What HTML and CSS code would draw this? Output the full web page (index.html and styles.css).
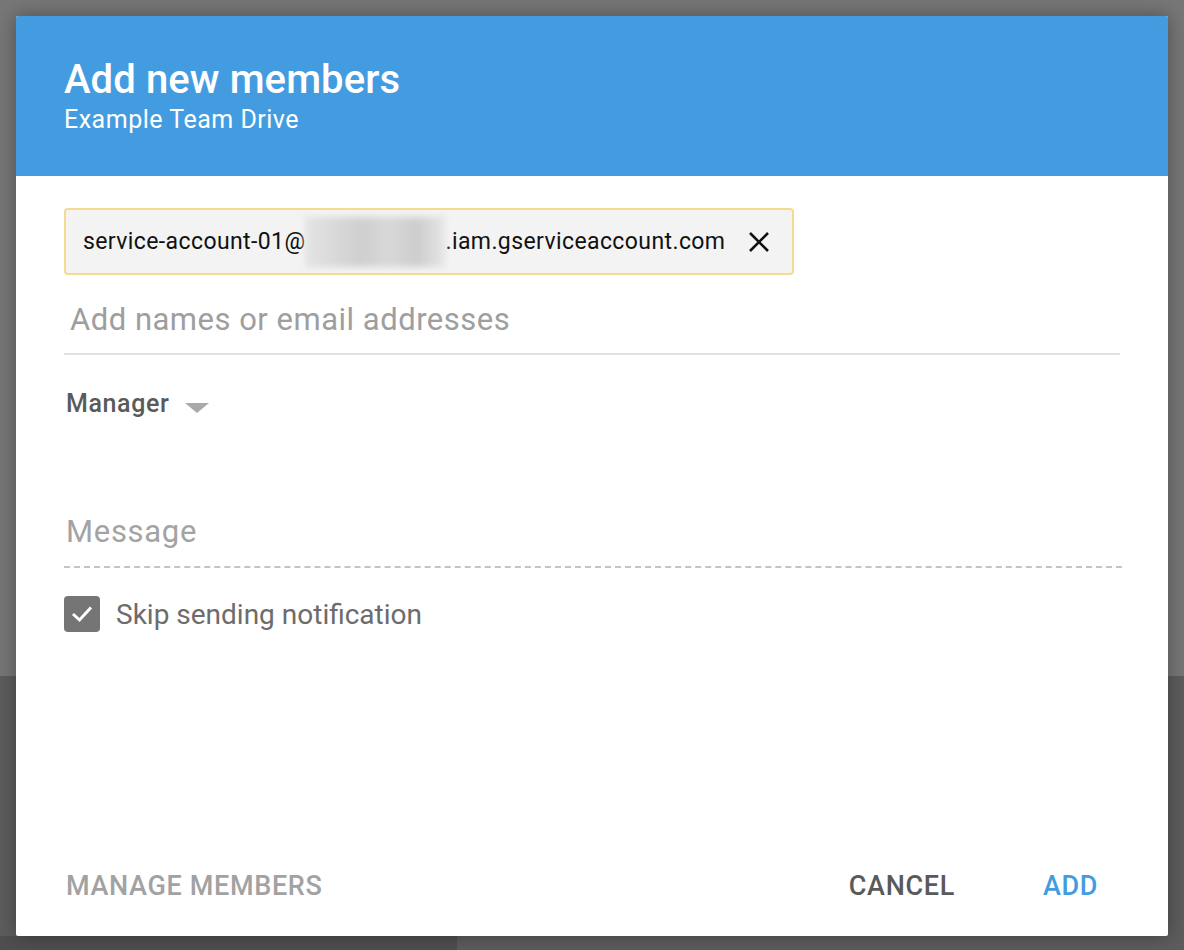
FILE: index.html
```html
<!DOCTYPE html>
<html>
<head>
<meta charset="utf-8">
<link rel="stylesheet" href="styles.css">
</head>
<body>
<div class="dialog">
  <header class="dlg-header">
    <h1 class="title">Add new members</h1>
    <div class="subtitle">Example Team Drive</div>
  </header>
  <main class="dlg-body">
    <div class="chip-row">
      <div class="chip">
        <span class="chip-text">service-account-01@</span><span class="blur"></span><span class="chip-text">.iam.gserviceaccount.com</span>
        <svg class="chip-x" width="22" height="22" viewBox="0 0 22 22"><path d="M2 2 L20 20 M20 2 L2 20" stroke="#111" stroke-width="2.6" fill="none"/></svg>
      </div>
    </div>
    <div class="add-input">Add names or email addresses</div>
    <div class="role">
      <span class="role-name">Manager</span>
      <svg class="caret" width="24" height="10" viewBox="0 0 24 10"><path d="M0 0 H24 L12 10 Z" fill="#a9a9a9"/></svg>
    </div>
    <div class="message">Message</div>
    <label class="check-row">
      <span class="checkbox">
        <svg width="24" height="20" viewBox="0 0 24 20"><path d="M3 10 L9.5 16 L21 3.5" stroke="#fff" stroke-width="3" fill="none"/></svg>
      </span>
      <span class="check-label">Skip sending notification</span>
    </label>
  </main>
  <footer class="dlg-footer">
    <span class="btn btn-manage">MANAGE MEMBERS</span>
    <span class="spacer"></span>
    <span class="btn btn-cancel">CANCEL</span>
    <span class="btn btn-add">ADD</span>
  </footer>
</div>
</body>
</html>
```
FILE: styles.css
```css
* { box-sizing: border-box; }
html, body { margin: 0; height: 100%; }
body {
  padding: 16px;
  font-family: Roboto, "Liberation Sans", Arial, sans-serif;
  background:
    linear-gradient(#4f4f4f, #4f4f4f) no-repeat 0 936px / 457px 14px,
    linear-gradient(to bottom, #777 0, #777 676px, #5d5d5d 676px, #5d5d5d 100%);
  overflow: hidden;
}
.dialog {
  width: 1152px;
  height: 920px;
  background: #fff;
  border-radius: 2px;
  overflow: hidden;
  display: flex;
  flex-direction: column;
  box-shadow: 0 0 20px rgba(0,0,0,0.35);
}
.dlg-header {
  height: 160px;
  background: #449ce0;
  color: #fff;
  padding: 40px 48px 0;
}
.title {
  margin: 0;
  font-size: 40px;
  font-weight: 500;
  line-height: 48px;
  letter-spacing: 0.1px;
}
.subtitle {
  font-size: 25px;
  line-height: 30px;
  margin-top: 1px;
  letter-spacing: 0.5px;
}
.dlg-body {
  flex: 1;
  padding: 32px 48px 0;
}
.chip-row { display: flex; }
.chip {
  display: flex;
  align-items: center;
  height: 67px;
  padding: 0 22px 0 17px;
  background: #f3f3f3;
  border: 2px solid #f3dc90;
  border-radius: 4px;
}
.chip-text {
  font-size: 23px;
  color: #111;
  letter-spacing: 0.4px;
}
.blur {
  width: 140px;
  height: 50px;
  background: linear-gradient(to right, #e4e4e4, #cfcfcf 40%, #d8d8d8 60%, #cdcdcd 80%, #e6e6e6);
  filter: blur(3px);
}
.chip-x { margin-left: 23px; }
.add-input {
  height: 80px;
  padding: 26px 0 0 6px;
  font-size: 31px;
  letter-spacing: 0.5px;
  color: #9e9e9e;
  border-bottom: 2px solid #e0e0e0;
}
.role {
  display: flex;
  height: 100px;
  padding: 34px 0 0 2px;
  align-items: flex-start;
}
.role-name {
  font-size: 25px;
  font-weight: 500;
  color: #5a5a5a;
  letter-spacing: 0.6px;
}
.caret { margin: 14px 0 0 16px; }
.message {
  margin-top: 58px;
  height: 55px;
  padding: 0 0 0 2px;
  font-size: 31px;
  letter-spacing: 0.7px;
  color: #a3a3a3;
  border-bottom: 2px dashed #c4c4c4;
  margin-right: -2px;
}
.check-row {
  display: flex;
  align-items: center;
  margin-top: 28px;
}
.checkbox {
  width: 36px;
  height: 36px;
  border-radius: 4px;
  background: #757575;
  display: flex;
  align-items: center;
  justify-content: center;
}
.check-label {
  margin-left: 16px;
  font-size: 28px;
  color: #6c6c6c;
}
.dlg-footer {
  display: flex;
  align-items: center;
  height: 100px;
  padding: 0 70px 0 50px;
}
.btn {
  font-size: 27px;
  font-weight: 500;
  letter-spacing: 0.65px;
}
.spacer { flex: 1; }
.btn-manage { color: #a2a2a2; }
.btn-cancel { color: #5a5a5a; margin-right: 88px; }
.btn-add { color: #449ce0; }
```
